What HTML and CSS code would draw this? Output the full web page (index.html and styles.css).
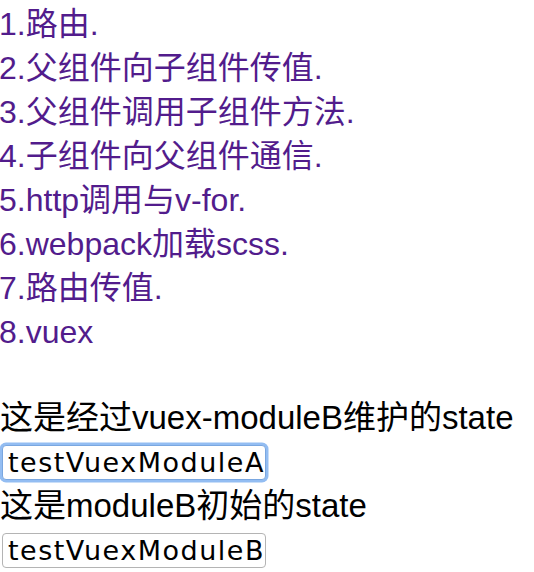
FILE: index.html
```html
<!DOCTYPE html>
<html lang="zh-CN">
<head>
<meta charset="utf-8">
<title>vuex demo</title>
<link rel="stylesheet" href="styles.css">
</head>
<body>
<div class="page">
  <nav class="nav">
    <a class="nav-link" href="#">1.路由.</a>
    <a class="nav-link" href="#">2.父组件向子组件传值.</a>
    <a class="nav-link" href="#">3.父组件调用子组件方法.</a>
    <a class="nav-link" href="#">4.子组件向父组件通信.</a>
    <a class="nav-link" href="#">5.http调用与v-for.</a>
    <a class="nav-link" href="#">6.webpack加载scss.</a>
    <a class="nav-link" href="#">7.路由传值.</a>
    <a class="nav-link" href="#">8.vuex</a>
  </nav>
  <section class="state">
    <div class="state-line">这是经过vuex-moduleB维护的state</div>
    <div class="input-row"><input class="state-input is-focused" type="text" value="testVuexModuleA"></div>
    <div class="state-line">这是moduleB初始的state</div>
    <div class="input-row"><input class="state-input" type="text" value="testVuexModuleB"></div>
  </section>
</div>
</body>
</html>
```
FILE: styles.css
```css
html, body {
  margin: 0;
  padding: 0;
  background: #ffffff;
}

.page {
  font-family: "Liberation Sans", "Noto Sans CJK SC", sans-serif;
  line-height: 44px;
  color: #000000;
  padding-top: 2px;
}

.nav {
  display: flex;
  flex-direction: column;
  align-items: flex-start;
  font-size: 32px;
}

.nav-link {
  color: #521c8c;
  text-decoration: none;
  height: 44px;
  margin-left: -1px;
}

.state {
  margin-top: 42px;
  display: flex;
  flex-direction: column;
  font-size: 33px;
}

.state-line {
  height: 44px;
  white-space: nowrap;
}

.input-row {
  height: 44px;
  display: flex;
  align-items: center;
  padding-left: 2px;
}

.state-input {
  box-sizing: border-box;
  width: 264px;
  height: 35px;
  margin: 0;
  padding: 0 0 0 5px;
  border: 1px solid #b4b4b4;
  border-radius: 4px;
  font-family: "DejaVu Sans", sans-serif;
  font-size: 27px;
  letter-spacing: 1.5px;
  color: #000000;
  background: #ffffff;
  outline: none;
}

.state-input.is-focused {
  border-color: #7aa7e0;
  box-shadow: 0 0 0 2.5px #93bdf2;
}
```
